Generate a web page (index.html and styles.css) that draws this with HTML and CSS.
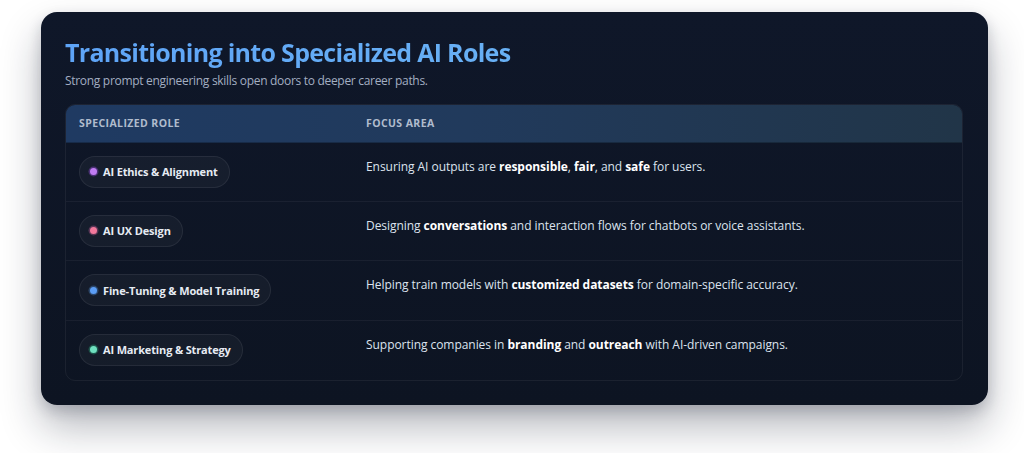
FILE: index.html
```html
<!DOCTYPE html>
<html lang="en">
<head>
<meta charset="utf-8">
<title>Transitioning into Specialized AI Roles</title>
<link rel="stylesheet" href="styles.css">
</head>
<body>
<section class="card">
  <h1 class="title">Transitioning into Specialized AI Roles</h1>
  <p class="subtitle">Strong prompt engineering skills open doors to deeper career paths.</p>
  <div class="table">
    <div class="row head">
      <div class="cell c1">Specialized Role</div>
      <div class="cell c2">Focus Area</div>
    </div>
    <div class="row">
      <div class="cell c1"><span class="pill"><span class="dot purple"></span>AI Ethics &amp; Alignment</span></div>
      <div class="cell c2 desc">Ensuring AI outputs are <b>responsible</b>, <b>fair</b>, and <b>safe</b> for users.</div>
    </div>
    <div class="row">
      <div class="cell c1"><span class="pill"><span class="dot pink"></span>AI UX Design</span></div>
      <div class="cell c2 desc">Designing <b>conversations</b> and interaction flows for chatbots or voice assistants.</div>
    </div>
    <div class="row">
      <div class="cell c1"><span class="pill"><span class="dot blue"></span>Fine-Tuning &amp; Model Training</span></div>
      <div class="cell c2 desc">Helping train models with <b>customized datasets</b> for domain-specific accuracy.</div>
    </div>
    <div class="row last">
      <div class="cell c1"><span class="pill"><span class="dot teal"></span>AI Marketing &amp; Strategy</span></div>
      <div class="cell c2 desc">Supporting companies in <b>branding</b> and <b>outreach</b> with AI-driven campaigns.</div>
    </div>
  </div>
</section>
</body>
</html>
```

FILE: styles.css
```css
html, body {
  margin: 0;
  padding: 0;
  background: #ffffff;
}
body {
  padding: 12px 36px 48px 41px;
  font-family: "Open Sans", "Noto Sans", "Liberation Sans", sans-serif;
}
.card {
  width: 947px;
  height: 393px;
  box-sizing: border-box;
  padding: 24px 25px 24px 24px;
  border-radius: 16px;
  background: linear-gradient(180deg, #0f1729 0%, #0d1422 100%);
  box-shadow: 0 22px 40px rgba(15, 23, 42, 0.30), 0 6px 14px rgba(15, 23, 42, 0.18);
  display: flex;
  flex-direction: column;
}
.title {
  margin: 0 0 4px;
  font-size: 25px;
  line-height: 32px;
  font-weight: 700;
  letter-spacing: -0.7px;
  background: linear-gradient(90deg, #5ea4f7 0%, #72bdf2 100%);
  -webkit-background-clip: text;
  background-clip: text;
  color: transparent;
}
.subtitle {
  margin: 0 0 14px;
  font-size: 12px;
  line-height: 18px;
  letter-spacing: -0.3px;
  color: #a3aec2;
}
.table {
  border: 1px solid rgba(255, 255, 255, 0.06);
  border-radius: 10px;
  overflow: hidden;
  flex: 1;
  display: flex;
  flex-direction: column;
}
.row {
  display: grid;
  grid-template-columns: 287px 1fr;
  border-bottom: 1px solid rgba(255, 255, 255, 0.05);
  height: 60px;
  box-sizing: border-box;
}
.row.last {
  border-bottom: none;
}
.row.head {
  height: 38px;
  background: linear-gradient(90deg, #1f3a62 0%, #213a5c 45%, #213548 100%);
  border-bottom: 1px solid rgba(0, 0, 0, 0.25);
}
.head .cell {
  display: flex;
  align-items: center;
  padding: 0 13px;
  font-size: 10.5px;
  font-weight: 700;
  letter-spacing: 0.4px;
  text-transform: uppercase;
  color: #b0bccd;
}
.cell {
  padding: 13px 13px 0;
}
.pill {
  display: inline-flex;
  align-items: center;
  height: 32px;
  box-sizing: border-box;
  padding: 0 11px 0 10px;
  border-radius: 16px;
  background: rgba(255, 255, 255, 0.035);
  border: 1px solid rgba(255, 255, 255, 0.07);
  font-size: 11px;
  font-weight: 700;
  letter-spacing: -0.15px;
  color: #e6ebf3;
  gap: 6px;
}
.dot {
  width: 7px;
  height: 7px;
  border-radius: 50%;
  flex: none;
}
.dot.purple { background: #c07cf2; box-shadow: 0 0 0 1.5px rgba(168, 85, 247, 0.35); }
.dot.pink { background: #f2789b; box-shadow: 0 0 0 1.5px rgba(244, 114, 182, 0.3); }
.dot.blue { background: #5b9df5; box-shadow: 0 0 0 1.5px rgba(96, 165, 250, 0.3); }
.dot.teal { background: #6fe0c0; box-shadow: 0 0 0 1.5px rgba(52, 211, 153, 0.3); }
.desc {
  padding-top: 14px;
  font-size: 12px;
  line-height: 20px;
  letter-spacing: -0.05px;
  color: #dce3ee;
}
.desc b {
  font-weight: 700;
  color: #ffffff;
}
```
